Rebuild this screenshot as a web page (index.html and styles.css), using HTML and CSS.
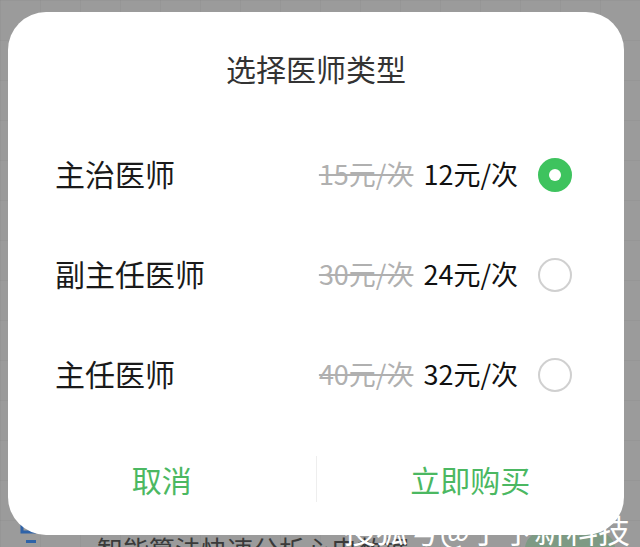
FILE: index.html
```html
<!DOCTYPE html>
<html lang="zh-CN">
<head>
<meta charset="utf-8">
<link rel="stylesheet" href="styles.css">
</head>
<body>
<div class="backdrop">
  <div class="bg-item">
    <svg class="bg-icon" width="24" height="30" viewBox="0 0 24 30">
      <path d="M2 0 V14 H16" fill="none" stroke="#2f63a8" stroke-width="3"/>
      <rect x="6" y="22" width="10" height="3" fill="#2f63a8"/>
    </svg>
    <span class="bg-text">智能算法快速分析心电数据</span>
  </div>
  <div class="bg-button"></div>
</div>

<div class="dialog">
  <div class="title">选择医师类型</div>
  <div class="rows">
    <div class="row">
      <span class="label">主治医师</span>
      <span class="old">15元/次</span>
      <span class="price">12元/次</span>
      <span class="radio on"></span>
    </div>
    <div class="row">
      <span class="label">副主任医师</span>
      <span class="old">30元/次</span>
      <span class="price">24元/次</span>
      <span class="radio"></span>
    </div>
    <div class="row">
      <span class="label">主任医师</span>
      <span class="old">40元/次</span>
      <span class="price">32元/次</span>
      <span class="radio"></span>
    </div>
  </div>
  <div class="footer">
    <div class="btn">取消</div>
    <div class="divider"></div>
    <div class="btn">立即购买</div>
  </div>
</div>

<div class="watermark">搜狐号@子予新科技</div>
</body>
</html>
```

FILE: styles.css
```css
html, body {
  margin: 0;
  padding: 0;
}
body {
  width: 640px;
  height: 547px;
  overflow: hidden;
  position: relative;
  font-family: "Noto Sans CJK SC", "Noto Sans", sans-serif;
  background-color: #9b9b9b;
  background-image:
    linear-gradient(to right, rgba(0,0,0,0.035) 1px, transparent 1px),
    linear-gradient(to bottom, rgba(0,0,0,0.035) 1px, transparent 1px);
  background-size: 40px 40px;
}
.backdrop {
  height: 547px;
  display: flex;
  flex-direction: column;
  justify-content: flex-end;
  position: relative;
}
.bg-item {
  display: flex;
  align-items: flex-start;
  height: 30px;
  margin-bottom: -17px;
  padding-left: 20px;
}
.bg-icon {
  margin-top: -16px;
  flex: none;
}
.bg-text {
  margin-left: 53px;
  font-size: 26px;
  line-height: 30px;
  color: #3a3a3a;
}
.bg-button {
  position: absolute;
  left: 525px;
  top: 532px;
  width: 90px;
  height: 34px;
  border-radius: 17px;
  background: #7e9a84;
}
.dialog {
  position: absolute;
  left: 8px;
  top: 12px;
  width: 616px;
  height: 523px;
  background: #fff;
  border-radius: 38px;
  display: flex;
  flex-direction: column;
}
.title {
  margin-top: 36px;
  height: 40px;
  line-height: 40px;
  text-align: center;
  font-size: 30px;
  color: #333;
}
.rows {
  margin-top: 35px;
  display: flex;
  flex-direction: column;
}
.row {
  height: 100px;
  display: flex;
  align-items: center;
  padding: 0 52px 0 47px;
}
.label {
  flex: 1;
  font-size: 30px;
  color: #1a1a1a;
}
.old {
  font-size: 27px;
  color: #b0b0b0;
  text-decoration: line-through;
  text-decoration-thickness: 2px;
  margin-right: 10px;
}
.price {
  font-size: 27px;
  color: #111;
  margin-right: 20px;
}
.radio {
  width: 30px;
  height: 30px;
  border: 2px solid #d0d0d0;
  border-radius: 50%;
  flex: none;
  box-sizing: content-box;
  margin-top: 3px;
}
.radio.on {
  border-color: #3ec35e;
  background: #3ec35e;
  position: relative;
}
.radio.on::after {
  content: "";
  position: absolute;
  left: 9px;
  top: 9px;
  width: 12px;
  height: 12px;
  border-radius: 50%;
  background: #fff;
}
.footer {
  margin-top: 11px;
  height: 90px;
  display: flex;
  align-items: center;
}
.btn {
  flex: 1;
  text-align: center;
  font-size: 30px;
  color: #4bb862;
}
.divider {
  width: 1px;
  height: 46px;
  background: #eeeeee;
}
.watermark {
  position: absolute;
  right: 10px;
  bottom: 2px;
  font-size: 32px;
  line-height: 32px;
  color: #ffffff;
  white-space: nowrap;
}
```
